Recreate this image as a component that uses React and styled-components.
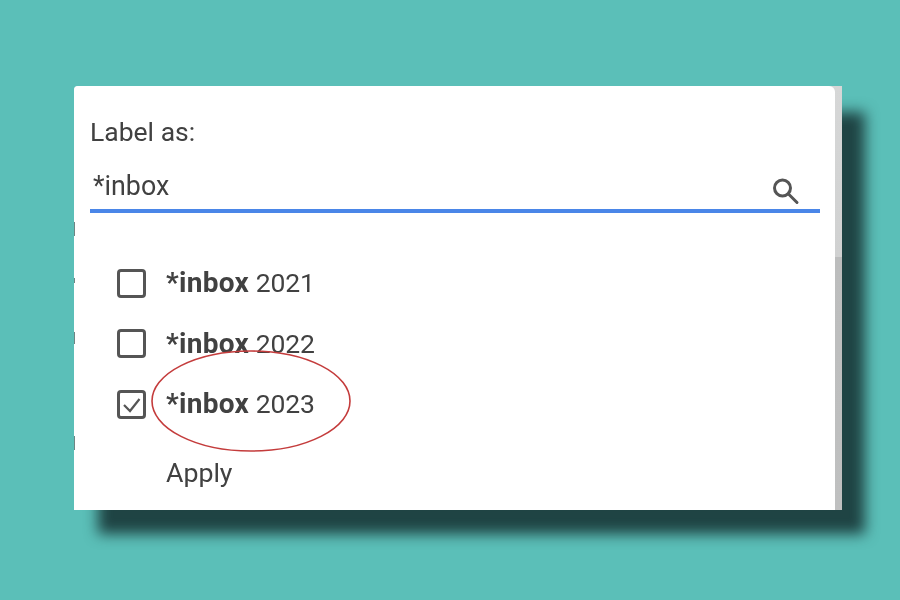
import React from "react";
import styled, { createGlobalStyle } from "styled-components";

const Global = createGlobalStyle`
  html, body { margin: 0; padding: 0; }
  body { background: #5bbfb8; font-family: Roboto, "Liberation Sans", sans-serif; }
`;

const Page = styled.div`
  width: 900px;
  height: 600px;
  box-sizing: border-box;
  padding: 86px 58px 90px 74px;
  background: #5bbfb8;
  overflow: hidden;
`;

const Card = styled.div`
  display: flex;
  height: 424px;
  padding-right: 7px;
  box-sizing: border-box;
  background: linear-gradient(#d6d7d7 0, #d0d1d1 171px, #bcbdbd 171px, #bfc0c0 100%);
  border-radius: 4px 0 0 0;
  box-shadow: 23.5px 25px 14px -1px #1f4444;
  filter: blur(0.35px);
`;

const Panel = styled.div`
  position: relative;
  flex: 1;
  box-sizing: border-box;
  background: #fff;
  border-radius: 4px 6px 0 0;
  padding: 30px 15px 0 16px;
  color: #414141;
`;

const Tick = styled.span`
  position: absolute;
  left: 0;
  top: ${(p) => p.$top}px;
  width: 1px;
  height: ${(p) => p.$height}px;
  background: #6f8583;
`;

const Title = styled.div`
  font-size: 26.5px;
  line-height: 32px;
  height: 32px;
`;

const SearchRow = styled.div`
  display: flex;
  align-items: center;
  justify-content: space-between;
  box-sizing: border-box;
  height: 57px;
  margin-top: 8px;
  border-bottom: 4px solid #4a86e8;
  padding: 6px 18px 0 3px;
  font-size: 26.8px;
`;

const SearchIcon = styled.svg`
  width: 32px;
  height: 32px;
  margin-top: 13px;
  color: #555;
`;

const List = styled.ul`
  list-style: none;
  margin: 40px 0 0;
  padding: 0 0 0 27px;
`;

const Row = styled.li`
  display: flex;
  align-items: center;
  height: 60.5px;
  gap: 20px;
`;

const RowText = styled.span`
  font-size: 26.5px;
  padding-bottom: 1px;
  letter-spacing: -0.1px;
  b { font-weight: 700; font-size: 28px; letter-spacing: 0.3px; }
`;

const Box = styled.span`
  box-sizing: border-box;
  display: flex;
  align-items: center;
  justify-content: center;
  width: 29px;
  height: 29px;
  border: 3px solid #555;
  border-radius: 4px;
`;

const Apply = styled.div`
  margin: 22px 0 0 76px;
  font-size: 26.7px;
  line-height: 32px;
`;

const Ring = styled.svg`
  position: absolute;
  left: 76px;
  top: 263px;
  width: 202px;
  height: 104px;
  pointer-events: none;
`;

const items = [
  { year: "2021", checked: false },
  { year: "2022", checked: false },
  { year: "2023", checked: true },
];

const ticks = [
  { top: 136, height: 14 },
  { top: 192, height: 5 },
  { top: 246, height: 12 },
  { top: 350, height: 14 },
];

export default function App() {
  return (
    <>
      <Global />
      <Page>
        <Card>
          <Panel>
            {ticks.map((t) => (
              <Tick key={t.top} $top={t.top} $height={t.height} />
            ))}
            <Title>Label as:</Title>
            <SearchRow>
              <span>*inbox</span>
              <SearchIcon viewBox="0 0 32 32" fill="none" stroke="currentColor" strokeWidth="3">
                <circle cx="12.5" cy="12" r="8" />
                <path d="M18.5 18 L27 26.5" strokeLinecap="round" />
              </SearchIcon>
            </SearchRow>
            <List>
              {items.map((it) => (
                <Row key={it.year}>
                  <Box>
                    {it.checked && (
                      <svg width="23" height="23" viewBox="0 0 23 23" fill="none" stroke="#555" strokeWidth="2.2">
                        <path d="M4 12 L10 18 L19.5 6" />
                      </svg>
                    )}
                  </Box>
                  <RowText>
                    <b>*inbox</b> {it.year}
                  </RowText>
                </Row>
              ))}
            </List>
            <Apply>Apply</Apply>
            <Ring viewBox="0 0 202 104" fill="none">
              <ellipse cx="101" cy="52" rx="99" ry="50" stroke="#c43c3c" strokeWidth="1.6" />
            </Ring>
          </Panel>
        </Card>
      </Page>
    </>
  );
}
